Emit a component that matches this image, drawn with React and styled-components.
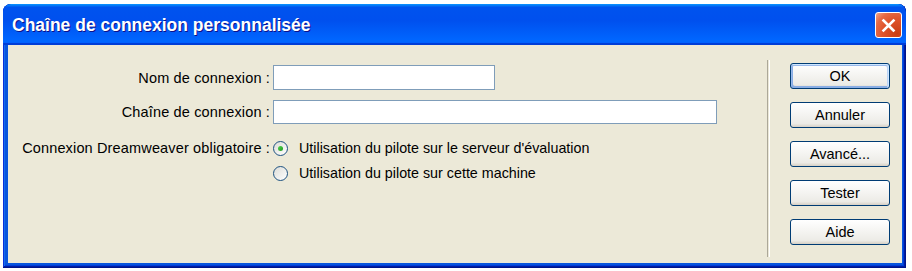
import React from "react";
import styled, { createGlobalStyle } from "styled-components";

const Global = createGlobalStyle`
  html, body {
    margin: 0;
    padding: 0;
    background: #ffffff;
  }
  body {
    font-family: "Liberation Sans", Arial, sans-serif;
  }
`;

const Window = styled.div`
  margin: 4px 0 0 3px;
  width: 903px;
  height: 264px;
  display: flex;
  flex-direction: column;
  box-sizing: border-box;
  border-radius: 8px 8px 0 0;
  background: #0855dd;
  padding: 0 4px 5px 5px;
  box-shadow: inset -1px -1px #00138c, inset 1px 1px #0831d9,
    inset -2px -2px #001ea0, inset 2px 2px #166aee, inset -3px -3px #003bda,
    inset 3px 3px #0855dd;
  overflow: hidden;
`;

const TitleBar = styled.div`
  height: 41px;
  margin: 0 -4px 0 -5px;
  padding: 0 4px 0 9px;
  display: flex;
  align-items: center;
  justify-content: space-between;
  border-radius: 8px 8px 0 0;
  background: linear-gradient(
    180deg,
    #0997ff,
    #0053ee 8%,
    #0050ee 40%,
    #06f 88%,
    #06f 93%,
    #005bff 95%,
    #003dd7 96%,
    #003dd7
  );
`;

const Title = styled.span`
  color: #ffffff;
  font-family: "Liberation Sans", Arial, sans-serif;
  font-weight: bold;
  font-size: 17.5px;
  text-shadow: 1px 1px #0f1089;
  margin-top: 2px;
`;

const CloseButton = styled.button`
  width: 27px;
  height: 26px;
  padding: 0;
  display: flex;
  align-items: center;
  justify-content: center;
  border: 1px solid #ffffff;
  border-radius: 3px;
  background: radial-gradient(
    circle at 85% 85%,
    #c93d14 0%,
    #e0542c 50%,
    #e66a45 75%,
    #f4a78c 100%
  );
  margin-top: 1px;
`;

const Client = styled.div`
  flex: 1;
  display: flex;
  background: #ece9d8;
`;

const Form = styled.div`
  width: 759px;
  display: grid;
  grid-template-columns: 262px 1fr;
  column-gap: 3px;
  align-content: start;
  padding-top: 20px;
`;

const Label = styled.label`
  font-size: 14.5px;
  letter-spacing: 0.15px;
  color: #000;
  text-align: right;
  align-self: ${(p) => (p.$start ? "start" : "center")};
  white-space: nowrap;
  margin-top: ${(p) => p.$top || 0}px;
`;

const Field = styled.input`
  box-sizing: border-box;
  width: ${(p) => p.$w}px;
  height: ${(p) => p.$h}px;
  border: 1px solid #7f9db9;
  background: #fff;
  margin: ${(p) => p.$top || 0}px 0 0 0;
  padding: 0 3px;
  font-family: inherit;
  font-size: 14px;
`;

const Options = styled.div`
  display: flex;
  flex-direction: column;
  gap: 9px;
  margin-top: 16px;
`;

const Option = styled.label`
  display: flex;
  align-items: center;
  gap: 11px;
  font-size: 14.3px;
  color: #000;
  height: 16px;
  white-space: nowrap;
`;

const Radio = styled.span`
  box-sizing: border-box;
  width: 15px;
  height: 15px;
  border-radius: 50%;
  border: 1px solid #1d5281;
  background: linear-gradient(135deg, #dcdcd7, #fff);
  display: flex;
  align-items: center;
  justify-content: center;

  &::after {
    content: "";
    width: 5px;
    height: 5px;
    border-radius: 50%;
    background: ${(p) =>
      p.$checked ? "linear-gradient(135deg, #55d451, #1d9a1d)" : "transparent"};
  }
`;

const Separator = styled.div`
  width: 1px;
  margin: 15px 0 6px 0;
  border-left: 1px solid #aca899;
  border-right: 1px solid #ffffff;
`;

const ButtonColumn = styled.div`
  display: flex;
  flex-direction: column;
  gap: 13px;
  padding: 18px 0 0 20px;
`;

const Button = styled.button`
  box-sizing: border-box;
  width: 100px;
  height: 26px;
  border: 1px solid #003c74;
  border-radius: 3px;
  background: linear-gradient(180deg, #fff, #ecebe6 86%, #d6d0c5);
  font-family: "Liberation Sans", Arial, sans-serif;
  font-weight: normal;
  font-size: 14.5px;
  color: #000;
  padding: 0;
  box-shadow: ${(p) =>
    p.$default
      ? "inset -1px 1px #cee7ff, inset 1px 2px #98b8ea, inset -2px 2px #bcd4f6, inset 1px -1px #89ade4, inset 2px -2px #89ade4"
      : "none"};
`;

function CloseIcon() {
  return (
    <svg width="15" height="15" viewBox="0 0 15 15">
      <path
        d="M2.5 2.5 L12.5 12.5 M12.5 2.5 L2.5 12.5"
        stroke="#fff"
        strokeWidth="2.6"
        strokeLinecap="square"
      />
    </svg>
  );
}

export default function App() {
  return (
    <>
      <Global />
      <Window>
        <TitleBar>
          <Title>Chaîne de connexion personnalisée</Title>
          <CloseButton aria-label="Fermer">
            <CloseIcon />
          </CloseButton>
        </TitleBar>
        <Client>
          <Form>
            <Label>Nom de connexion :</Label>
            <Field $w={222} $h={25} />
            <Label $top={10}>Chaîne de connexion :</Label>
            <Field $w={444} $h={24} $top={10} />
            <Label $start $top={16}>
              Connexion Dreamweaver obligatoire :
            </Label>
            <Options>
              <Option>
                <Radio $checked />
                Utilisation du pilote sur le serveur d'évaluation
              </Option>
              <Option>
                <Radio />
                Utilisation du pilote sur cette machine
              </Option>
            </Options>
          </Form>
          <Separator />
          <ButtonColumn>
            <Button $default>OK</Button>
            <Button>Annuler</Button>
            <Button>Avancé...</Button>
            <Button>Tester</Button>
            <Button>Aide</Button>
          </ButtonColumn>
        </Client>
      </Window>
    </>
  );
}
